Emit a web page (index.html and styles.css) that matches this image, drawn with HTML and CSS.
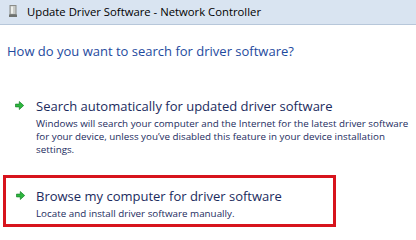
FILE: index.html
```html
<!DOCTYPE html>
<html>
<head>
<meta charset="utf-8">
<link rel="stylesheet" href="styles.css">
</head>
<body>
<div class="window">
  <div class="titlebar">
    <svg class="devicon" width="8" height="12" viewBox="0 0 8 12">
      <rect x="1" y="0.5" width="6" height="9" fill="#c9cbc8" stroke="#8a8c88" stroke-width="1"/>
      <rect x="2" y="1.5" width="2" height="7" fill="#eef0ec"/>
      <rect x="0" y="9.5" width="8" height="2.5" fill="#6f726e"/>
    </svg>
    <span class="title">Update Driver Software - Network Controller</span>
  </div>
  <div class="content">
    <h1 class="heading">How do you want to search for driver software?</h1>
    <div class="option">
      <svg class="arrow" width="9" height="9" viewBox="0 0 9 9">
        <path d="M0.5 3.1 H4.3 V0.5 L8.7 4.5 L4.3 8.5 V5.9 H0.5 Z" fill="#2db83e" stroke="#17802a" stroke-width="0.7"/>
      </svg>
      <div class="opt-text">
        <div class="opt-title">Search automatically for updated driver software</div>
        <div class="opt-desc">Windows will search your computer and the Internet for the latest driver software<br>for your device, unless you’ve disabled this feature in your device installation<br>settings.</div>
      </div>
    </div>
    <div class="option highlighted">
      <svg class="arrow" width="9" height="9" viewBox="0 0 9 9">
        <path d="M0.5 3.1 H4.3 V0.5 L8.7 4.5 L4.3 8.5 V5.9 H0.5 Z" fill="#2db83e" stroke="#17802a" stroke-width="0.7"/>
      </svg>
      <div class="opt-text">
        <div class="opt-title">Browse my computer for driver software</div>
        <div class="opt-desc">Locate and install driver software manually.</div>
      </div>
    </div>
  </div>
</div>
</body>
</html>
```
FILE: styles.css
```css
html, body {
  margin: 0;
  padding: 0;
  background: #ffffff;
}
.window {
  width: 416px;
  height: 236px;
  overflow: hidden;
  font-family: "Open Sans", "Noto Sans", sans-serif;
}
.titlebar {
  height: 25px;
  box-sizing: border-box;
  background: #d9e4f1;
  border-bottom: 1px solid #b7c7da;
  display: flex;
  align-items: center;
  padding: 0 0 2px 9px;
}
.devicon {
  margin-right: 10px;
}
.title {
  font-size: 11.3px;
  color: #000;
}
.content {
  padding: 18px 0 0 7px;
}
.heading {
  margin: 0 0 38px 0;
  font-weight: normal;
  font-size: 13px;
  line-height: 16px;
  color: #1e4a9e;
}
.option {
  display: flex;
  align-items: flex-start;
  padding-left: 8px;
}
.arrow {
  margin-top: 4px;
  margin-right: 12px;
  flex: none;
}
.opt-text {
  flex: none;
  white-space: nowrap;
}
.opt-title {
  font-size: 13px;
  line-height: 18px;
  color: #1b2b5e;
}
.opt-desc {
  margin-top: 2px;
  font-size: 9.8px;
  line-height: 13px;
  color: #1b2b5e;
}
.highlighted {
  margin-top: 19px;
  margin-left: -4px;
  border: 3px solid #d7141d;
  padding: 9px 0 4px 10px;
  width: 333px;
  box-sizing: border-box;
}
.highlighted .arrow {
  margin-right: 11px;
}
```
